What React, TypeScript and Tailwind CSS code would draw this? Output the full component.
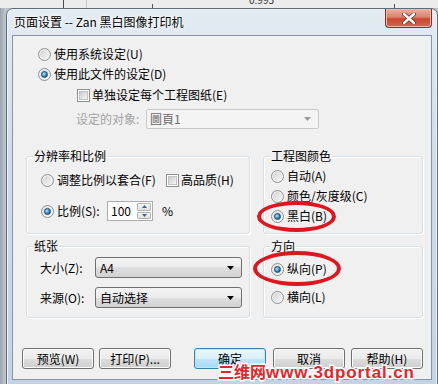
import React from "react";

const Radio = ({ checked }: { checked?: boolean }) => (
  <span className="flex h-[13px] w-[13px] shrink-0 items-center justify-center rounded-full border border-[#8e8f8f] bg-[linear-gradient(135deg,#cfcfcf,#f9f9f9)] shadow-[inset_0_0_0_1px_#f4f4f4]">
    {checked && (
      <span className="h-[7px] w-[7px] rounded-full border border-[#1c4b6e] bg-[radial-gradient(circle_at_35%_35%,#b7e6fb,#2d7fb4_60%,#14507e)]" />
    )}
  </span>
);

const Check = () => (
  <span className="flex h-[13px] w-[13px] shrink-0 items-center justify-center border border-[#8f8f8f] bg-white">
    <span className="h-[9px] w-[9px] border border-[#c4c4c4] bg-[linear-gradient(135deg,#cbcbcb,#f6f6f6)]" />
  </span>
);

const Arrow = ({ color = "#000" }: { color?: string }) => (
  <svg width="7" height="4" viewBox="0 0 7 4">
    <path d="M0 0H7L3.5 4Z" fill={color} />
  </svg>
);

const Combo = ({ text, w }: { text: string; w: string }) => (
  <div
    className={`${w} flex h-full items-center justify-between rounded-[3px] border border-[#707070] bg-[linear-gradient(#f4f4f4_0%,#ececec_50%,#dfdfdf_50%,#d2d2d2_100%)] pl-[4px] pr-[7px]`}
  >
    <span>{text}</span>
    <Arrow />
  </div>
);

const Btn = ({ children, def }: { children: React.ReactNode; def?: boolean }) => (
  <div
    className={
      def
        ? "flex h-[21px] w-[72px] items-center justify-center rounded-[3px] border border-[#3c7fb1] bg-[linear-gradient(#eaf6fd_0%,#d9f0fc_50%,#bee6fd_50%,#a7d9f5_100%)] shadow-[inset_0_0_0_1px_#c6e6f8]"
        : "flex h-[21px] w-[72px] items-center justify-center rounded-[3px] border border-[#707070] bg-[linear-gradient(#f2f2f2_0%,#ebebeb_50%,#dddddd_50%,#cfcfcf_100%)] shadow-[inset_0_0_0_1px_#fbfbfb]"
    }
  >
    {children}
  </div>
);

const Group = ({
  label,
  className,
  children,
}: {
  label: string;
  className: string;
  children: React.ReactNode;
}) => (
  <div
    className={`relative flex flex-col rounded-[3px] border border-[#d5dfe5] shadow-[inset_1px_1px_0_#fff,1px_1px_0_#fff] ${className}`}
  >
    <span className="absolute left-[6px] top-[-9px] bg-[#f0f0f0] px-[1px] leading-[16px]">{label}</span>
    {children}
  </div>
);

export default function App() {
  return (
    <div className="relative flex h-[384px] w-[438px] flex-col overflow-hidden bg-[#b9c2cb] font-['Noto_Sans_CJK_SC','Noto_Sans',sans-serif] text-[12px] leading-[16px] text-black">
      {/* backdrop strip */}
      <div className="relative flex h-[8px] shrink-0 bg-[#ececec]">
        <div className="ml-[63px] h-full w-[1px] bg-[#4a4a4a]" />
        <div className="ml-[22px] h-full w-[1px] bg-[#c8c8c8]" />
        <div className="ml-[65px] mt-[4px] h-[4px] w-[1px] bg-[#555]" />
        <span className="ml-[96px] mt-[-6px] text-[10px] leading-[12px] text-[#333]">0.995</span>
        <div className="ml-[120px] mt-[4px] h-[4px] w-[1px] bg-[#555]" />
      </div>
      <div className="flex flex-1">
        <div className="w-[6px] shrink-0 bg-[linear-gradient(90deg,#9aa3ac,#c3cad1)]" />
        {/* window */}
        <div className="flex h-[380px] w-[432px] shrink-0 flex-col rounded-t-[7px] border border-[#5d6b7a] bg-[linear-gradient(#e3ebf3,#cfdbe8_40%,#c4d3e3)] px-[5px] shadow-[inset_0_0_0_1px_#eef3f8]">
          {/* title bar */}
          <div className="flex h-[26px] shrink-0 items-start justify-between">
            <span className="ml-[2px] mt-[5px] leading-[16px] text-[12px] text-black [text-shadow:0_0_6px_#fff,0_0_3px_#fff]">
              页面设置 -- Zan 黑白图像打印机
            </span>
            <div className="flex h-[19px] w-[47px] items-center justify-center rounded-b-[4px] border border-t-0 border-[#7f3226] bg-[linear-gradient(#eab0a2_0%,#dc8170_45%,#c9462f_55%,#d06a4f_100%)] shadow-[inset_0_0_0_1px_#f0b9ab]">
              <svg width="14" height="11" viewBox="0 0 14 11">
                <path d="M2 1L12 10M12 1L2 10" stroke="#6b2a20" strokeWidth="4" strokeLinecap="round" />
                <path d="M2 1L12 10M12 1L2 10" stroke="#fff" strokeWidth="2.4" strokeLinecap="round" />
              </svg>
            </div>
          </div>
          {/* content panel */}
          <div className="flex h-[345px] shrink-0 flex-col border border-[#8696a8] bg-[#f0f0f0] pt-[8px]">
            <div className="flex h-[20px] items-center gap-[3px] pl-[25px]">
              <Radio />
              <span>使用系统设定(U)</span>
            </div>
            <div className="flex h-[20px] items-center gap-[3px] pl-[25px]">
              <Radio checked />
              <span>使用此文件的设定(D)</span>
            </div>
            <div className="flex h-[22px] items-center gap-[2px] pl-[64px]">
              <Check />
              <span>单独设定每个工程图纸(E)</span>
            </div>
            <div className="mt-[3px] flex h-[20px] items-center pl-[63px]">
              <span className="w-[70px] text-[#a3a3a3]">设定的对象:</span>
              <div className="flex h-full w-[173px] items-center justify-between rounded-[2px] border border-[#c9c9c9] bg-[#f4f4f4] pl-[3px] pr-[7px] text-[#6a6a6a]">
                <span>圖頁1</span>
                <Arrow color="#9a9a9a" />
              </div>
            </div>

            {/* first groups row */}
            <div className="mt-[27px] flex gap-[13px] pl-[13px]">
              <Group label="分辨率和比例" className="h-[78px] w-[224px]">
                <div className="mt-[13px] flex h-[20px] items-center pl-[14px]">
                  <div className="flex w-[125px] items-center gap-[3px]">
                    <Radio />
                    <span>调整比例以套合(F)</span>
                  </div>
                  <div className="flex items-center gap-[2px]">
                    <Check />
                    <span>高品质(H)</span>
                  </div>
                </div>
                <div className="mt-[11px] flex h-[20px] items-center pl-[14px]">
                  <div className="flex w-[66px] items-center gap-[3px]">
                    <Radio checked />
                    <span>比例(S):</span>
                  </div>
                  <div className="flex h-[20px] w-[46px] border border-[#abadb3] bg-white">
                    <span className="flex flex-1 items-center pl-[3px]">100</span>
                    <div className="flex w-[16px] flex-col gap-[1px] p-[1px]">
                      <div className="flex flex-1 items-center justify-center rounded-[1px] border border-[#b5b5b5] bg-[linear-gradient(#f4f4f4,#dedede)]">
                        <svg width="5" height="3" viewBox="0 0 5 3">
                          <path d="M0 3H5L2.5 0Z" fill="#4d6185" />
                        </svg>
                      </div>
                      <div className="flex flex-1 items-center justify-center rounded-[1px] border border-[#b5b5b5] bg-[linear-gradient(#f4f4f4,#dedede)]">
                        <svg width="5" height="3" viewBox="0 0 5 3">
                          <path d="M0 0H5L2.5 3Z" fill="#4d6185" />
                        </svg>
                      </div>
                    </div>
                  </div>
                  <span className="ml-[9px]">%</span>
                </div>
              </Group>
              <Group label="工程图颜色" className="h-[78px] w-[160px]">
                <div className="mt-[9px] flex h-[20px] items-center gap-[3px] pl-[7px]">
                  <Radio />
                  <span>自动(A)</span>
                </div>
                <div className="flex h-[20px] items-center gap-[3px] pl-[7px]">
                  <Radio />
                  <span>颜色/灰度级(C)</span>
                </div>
                <div className="flex h-[20px] items-center gap-[3px] pl-[7px]">
                  <Radio checked />
                  <span>黑白(B)</span>
                </div>
              </Group>
            </div>

            {/* second groups row */}
            <div className="mt-[12px] flex gap-[13px] pl-[13px]">
              <Group label="纸张" className="h-[72px] w-[224px]">
                <div className="mt-[10px] flex h-[21px] items-center pl-[13px]">
                  <span className="w-[55px]">大小(Z):</span>
                  <Combo text="A4" w="w-[147px]" />
                </div>
                <div className="mt-[9px] flex h-[21px] items-center pl-[13px]">
                  <span className="w-[55px]">来源(O):</span>
                  <Combo text="自动选择" w="w-[147px]" />
                </div>
              </Group>
              <Group label="方向" className="h-[72px] w-[160px]">
                <div className="mt-[12px] flex h-[20px] items-center gap-[3px] pl-[7px]">
                  <Radio checked />
                  <span>纵向(P)</span>
                </div>
                <div className="mt-[8px] flex h-[20px] items-center gap-[3px] pl-[7px]">
                  <Radio />
                  <span>横向(L)</span>
                </div>
              </Group>
            </div>

            {/* buttons */}
            <div className="mt-[30px] flex pl-[9px]">
              <Btn>预览(W)</Btn>
              <div className="ml-[5px]">
                <Btn>打印(P)...</Btn>
              </div>
              <div className="ml-[23px]">
                <Btn def>确定</Btn>
              </div>
              <div className="ml-[7px]">
                <Btn>取消</Btn>
              </div>
              <div className="ml-[6px]">
                <Btn>帮助(H)</Btn>
              </div>
            </div>
          </div>
        </div>
      </div>

      {/* annotation ellipses */}
      <div className="absolute left-[257px] top-[201px] h-[31px] w-[79px] rounded-[50%] border-[4px] border-[#dd1620]" />
      <div className="absolute left-[253px] top-[251px] h-[35px] w-[88px] rounded-[50%] border-[4px] border-[#dd1620]" />

      {/* watermark */}
      <div className="absolute left-[218px] top-[361px] flex items-baseline whitespace-nowrap font-bold text-[#e3262a] [-webkit-text-stroke:3px_#fff] [paint-order:stroke_fill]">
        <span className="font-['Noto_Sans_CJK_SC',sans-serif] text-[16px] leading-[20px]">三维网</span>
        <span className="font-['Liberation_Sans',sans-serif] text-[17px] leading-[20px] tracking-[0.9px]">www.3dportal.cn</span>
      </div>
    </div>
  );
}
